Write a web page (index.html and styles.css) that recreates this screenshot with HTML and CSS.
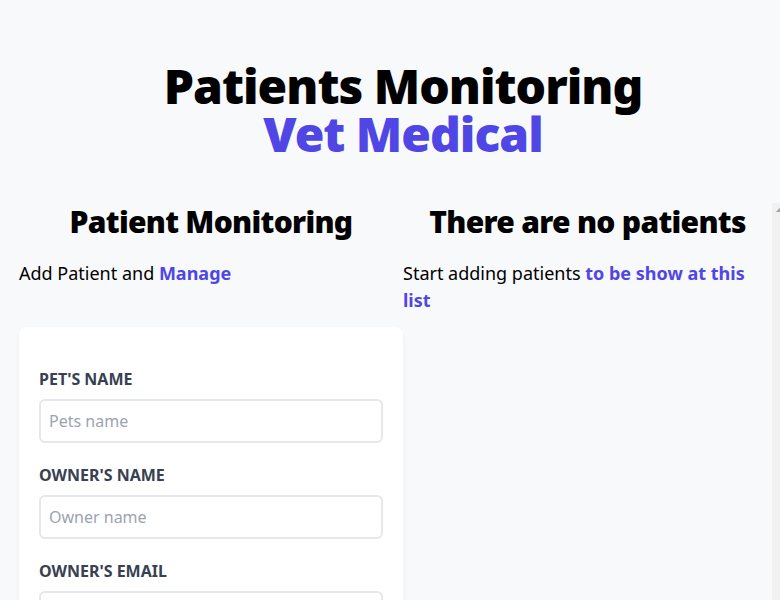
FILE: index.html
```html
<!DOCTYPE html>
<html lang="en">
<head>
<meta charset="utf-8">
<title>Patients Monitoring - Vet Medical</title>
<link rel="stylesheet" href="styles.css">
</head>
<body>
<div class="container">
  <h1 class="title">Patients Monitoring <span class="accent">Vet Medical</span></h1>
  <div class="columns">
    <section class="form-col">
      <h2 class="col-title">Patient Monitoring</h2>
      <p class="col-text">Add Patient and <span class="accent-bold">Manage</span></p>
      <form class="card">
        <div class="field">
          <label class="label" for="pet">Pet's Name</label>
          <input class="input" id="pet" type="text" placeholder="Pets name">
        </div>
        <div class="field">
          <label class="label" for="owner">Owner's Name</label>
          <input class="input" id="owner" type="text" placeholder="Owner name">
        </div>
        <div class="field">
          <label class="label" for="email">Owner's Email</label>
          <input class="input" id="email" type="email" placeholder="Email">
        </div>
      </form>
    </section>
    <section class="list-col">
      <div class="list-content">
        <h2 class="col-title">There are no patients</h2>
        <p class="col-text">Start adding patients <span class="accent-bold">to be show at this list</span></p>
      </div>
      <div class="scrollbar" aria-hidden="true">
        <svg class="scroll-arrow" width="15" height="14" viewBox="0 0 15 14">
          <path d="M4 9 L7.5 5 L11 9 Z" fill="#a3a3a3"/>
        </svg>
      </div>
    </section>
  </div>
</div>
</body>
</html>
```
FILE: styles.css
```css
html, body {
  margin: 0;
  padding: 0;
  overflow: hidden;
  height: 100%;
}
body {
  background: #f8f9fb;
  font-family: "Noto Sans", "Open Sans", sans-serif;
  color: #000;
}
.container {
  width: 768px;
  margin-left: 19px;
  padding-top: 62px;
}
.title {
  margin: 0 auto;
  width: 512px;
  text-align: center;
  font-size: 48px;
  line-height: 48px;
  font-weight: 900;
  letter-spacing: -1px;
}
.accent {
  color: #4f46e5;
}
.columns {
  display: flex;
  margin-top: 45px;
}
.form-col {
  width: 384px;
  flex: 0 0 384px;
  padding-top: 1px;
}
.list-col {
  width: 384px;
  flex: 0 0 384px;
  height: 400px;
  display: flex;
}
.list-content {
  flex: 1;
  min-width: 0;
  padding-top: 1px;
}
.scrollbar {
  flex: 0 0 15px;
  background: #f1f1f1;
}
.scroll-arrow {
  display: block;
}
.col-title {
  margin: 0;
  text-align: center;
  font-size: 30px;
  line-height: 36px;
  font-weight: 900;
  letter-spacing: -0.7px;
}
.col-text {
  margin: 20px 0 40px;
  font-size: 18px;
  line-height: 27px;
}
.accent-bold {
  color: #4f46e5;
  font-weight: 700;
}
.card {
  background: #fff;
  border-radius: 8px;
  box-shadow: 0 4px 6px -1px rgba(0,0,0,0.06), 0 2px 4px -2px rgba(0,0,0,0.05);
  padding: 40px 20px;
}
.field {
  margin-bottom: 20px;
}
.label {
  display: block;
  color: #374151;
  text-transform: uppercase;
  font-weight: 700;
  font-size: 16px;
  line-height: 24px;
}
.input {
  display: block;
  box-sizing: border-box;
  width: 100%;
  margin-top: 8px;
  padding: 8px;
  border: 2px solid #e5e7eb;
  border-radius: 6px;
  font-family: inherit;
  font-size: 16px;
  line-height: 24px;
  background: #fff;
  outline: none;
}
.input::placeholder {
  color: #9ca3af;
}
```
